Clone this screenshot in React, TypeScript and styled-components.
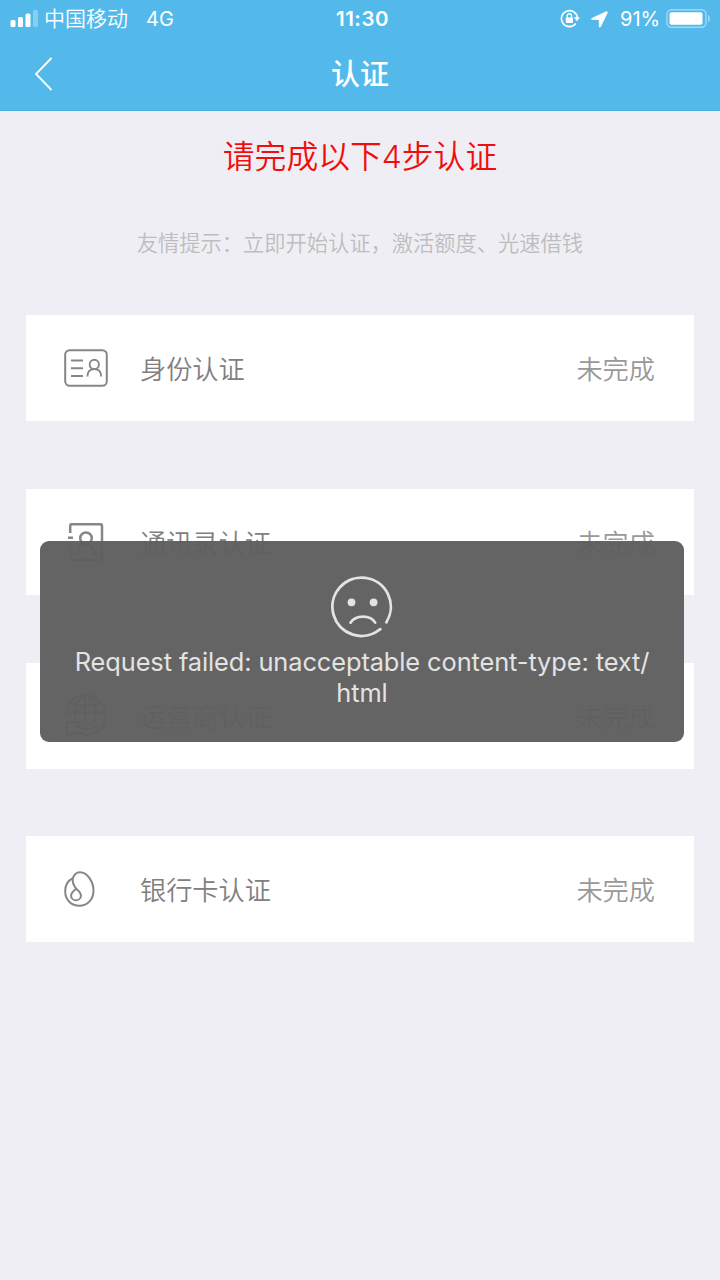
import React from 'react';
import styled, { createGlobalStyle } from 'styled-components';

const GlobalStyle = createGlobalStyle`
  * { box-sizing: border-box; }
  body {
    margin: 0;
    background: #efeef4;
    font-family: Inter, "Noto Sans CJK SC", sans-serif;
  }
`;

const Screen = styled.div`
  position: relative;
  width: 720px;
  height: 1280px;
  overflow: hidden;
  background: #efeef4;
`;

const Header = styled.header`
  height: 111px;
  background: #53b9ea;
  border-bottom: 1px solid #4eaedc;
  color: #fff;
`;

const StatusBar = styled.div`
  display: grid;
  grid-template-columns: 1fr auto 1fr;
  align-items: center;
  height: 38px;
  padding: 0 10px;
  font-size: 20px;
  line-height: 38px;
`;

const StatusGroup = styled.div<{ $end?: boolean }>`
  display: flex;
  align-items: center;
  justify-content: ${({ $end }) => ($end ? 'flex-end' : 'flex-start')};
  height: 38px;
`;

const Carrier = styled.span`
  margin-left: 6px;
  font-size: 21px;
  font-weight: 350;
`;

const Network = styled.span`
  margin-left: 18px;
`;

const Clock = styled.span`
  padding-left: 5px;
  font-weight: 600;
  font-size: 20.5px;
  letter-spacing: 0.5px;
`;

const Percent = styled.span`
  margin: 0 6px 0 12px;
  letter-spacing: -0.1px;
`;

const LocationSlot = styled.span`
  display: flex;
  margin-left: 11px;
`;

const NavBar = styled.div`
  display: grid;
  grid-template-columns: 60px 1fr 60px;
  align-items: center;
  height: 72px;
`;

const BackButton = styled.button`
  display: flex;
  padding: 0 0 2px 34px;
  border: 0;
  background: none;
  color: inherit;
`;

const Title = styled.h1`
  margin: 0;
  padding-top: 1px;
  font-size: 29px;
  font-weight: 500;
  line-height: 72px;
  text-align: center;
`;

const Heading = styled.h2`
  margin: 24px 0 0;
  color: #f20d0d;
  font-size: 31.8px;
  font-weight: 350;
  line-height: 44px;
  text-align: center;
`;

const Hint = styled.p`
  margin: 49px 0 0;
  color: #bdbdc0;
  font-size: 21.25px;
  font-weight: 350;
  line-height: 30px;
  text-align: center;
`;

const List = styled.main`
  display: flex;
  flex-direction: column;
  gap: 67.8px;
  padding: 57px 26px 0;
`;

const Card = styled.section`
  display: flex;
  align-items: center;
  height: 106px;
  padding: 0 39px 0 38px;
  background: #fff;
  font-size: 26.2px;
  font-weight: 350;
`;

const IconSlot = styled.span`
  display: flex;
  width: 76px;
  color: #868686;
`;

const Label = styled.span`
  flex: 1;
  color: #808080;
`;

const State = styled.span`
  color: #999;
`;

const Toast = styled.div`
  position: absolute;
  left: 40px;
  top: 541px;
  display: flex;
  flex-direction: column;
  align-items: center;
  width: 644px;
  height: 201px;
  padding-top: 35px;
  border-radius: 9px;
  background: rgba(94, 94, 94, 0.965);
  color: #e3e3e3;
`;

const Message = styled.p`
  margin: 8px 0 0;
  font-size: 25.4px;
  letter-spacing: -0.1px;
  line-height: 31px;
  text-align: center;
  white-space: nowrap;
`;

const SignalIcon = () => (
  <svg width="28" height="18" viewBox="0 0 28 18" fill="currentColor">
    <rect x="0.5" y="10" width="5" height="7" rx="1.5" />
    <rect x="8" y="7" width="5" height="10" rx="1.5" />
    <rect x="15.5" y="3.5" width="5" height="13.5" rx="1.5" />
    <rect x="23" y="0" width="5" height="17" rx="1.5" opacity=".3" />
  </svg>
);

const LockIcon = () => (
  <svg width="20" height="20" viewBox="0 0 20 20" fill="none" stroke="currentColor">
    <path d="M15.8 14.500A8 8 0 1 1 17.400 8.800" strokeWidth="1.6" />
    <path d="M13.800 8.200h6.200l-3.100 4z" fill="currentColor" stroke="none" />
    <rect x="5.800" y="8.4" width="7.2" height="5.6" rx=".8" fill="currentColor" stroke="none" />
    <path d="M7.300 9V6.8a2.1 2.1 0 0 1 4.2 0V9" strokeWidth="1.4" />
  </svg>
);

const LocationIcon = () => (
  <svg width="17" height="17" viewBox="0 0 17 17" fill="currentColor" stroke="currentColor" strokeWidth=".9" strokeLinejoin="round">
    <path d="M15.2.8 1 7.400c-.8.4-.6 1.100.2 1.100h6.700c.3 0 .4.1.4.4v6.700c0 .8.9.9 1.200.2L16.200 1.700c.3-.7-.3-1.200-1-.9z" />
  </svg>
);

const BatteryIcon = () => (
  <svg width="44" height="20" viewBox="0 0 44 20">
    <rect x="1" y="0.700" width="39" height="17.500" rx="4.500" fill="none" stroke="#fff" strokeWidth="1.400" opacity=".45" />
    <rect x="3.500" y="3.200" width="33" height="12.500" rx="1.800" fill="#fff" />
    <path d="M42 6c2.500 1.200 2.500 5.800 0 7z" fill="#fff" opacity=".45" />
  </svg>
);

const BackIcon = () => (
  <svg width="20" height="34" viewBox="0 0 20 34" fill="none" stroke="currentColor" strokeWidth="1.800">
    <path d="M17.500 1 2 17l15.500 16" />
  </svg>
);

const IdCardIcon = () => (
  <svg width="44" height="38" viewBox="0 0 44 38" fill="none" stroke="currentColor">
    <rect x="1.200" y="1.200" width="41.600" height="35.600" rx="4.500" strokeWidth="2" />
    <path d="M7 11.500h12M7 19.200h12M7 27h12" strokeWidth="2" />
    <ellipse cx="30.300" cy="15.400" rx="4.600" ry="4.700" strokeWidth="1.900" />
    <path d="M23.500 27.500c0-4.600 2.600-7.400 6.800-7.400s6.800 2.800 6.800 7.400" strokeWidth="1.900" />
  </svg>
);

const ContactsIcon = () => (
  <svg width="44" height="38" viewBox="0 0 44 38" fill="none" stroke="currentColor" strokeWidth="2.500">
    <path d="M6.200 10V2.700q0-1.500 1.500-1.500H36.500q1.500 0 1.500 1.500v32.800q0 1.500-1.500 1.500H8q-1.500 0-1.500-1.500V30M4 14.800h5M6.200 19v3M4 25.500h5" />
    <circle cx="22" cy="15.200" r="5.800" />
    <path d="M13.500 32c0-6.500 3.300-10.500 8.500-10.500s8.500 4 8.500 10.500" />
  </svg>
);

const GlobeIcon = () => (
  <svg width="44" height="44" viewBox="0 0 44 44" fill="none" stroke="currentColor" strokeWidth="2">
    <path d="M2 24A20 20 0 1 1 23 41c-4 0-6-1-9-3L3 42V28h12l-2 3c5 5 13 6 20 1" />
    <path d="M1.500 18.500h40M21 1v27M19 1c-7 7-9 16-8 25M23 1c8 7 10 16 8 27M6 8c9 5 22 5 31 0" />
  </svg>
);

const BankIcon = () => (
  <svg width="32" height="36" viewBox="0 0 32 36" fill="none" stroke="currentColor" strokeWidth="2">
    <path d="M8.800 7.200C10.300 3.200 12.300 1.200 15.800 1.200c7.600 0 13.700 9.600 13.700 18.300C29.500 28.300 23.700 34.800 15.500 34.800S1.200 28.800 1.200 20.200C1.200 14.300 4.100 9.600 8.800 7.200c-.6 4.600.8 7.500 3.500 10.600 2.600 2.300 4.600 4.300 4.600 6.600a4.900 4.900 0 0 1-9.800 0c0-2.400 2.500-4.500 5.200-6.600" />
  </svg>
);

const SadIcon = () => (
  <svg width="62" height="62" viewBox="0 0 62 62" fill="none" stroke="currentColor" strokeLinecap="round">
    <path d="M49.300 53.200A29.200 29.200 0 1 1 55.400 46.200" strokeWidth="2.800" />
    <path d="M19.500 46.700C24.500 38.500 39.500 38.500 44.200 46.700" strokeWidth="2.700" />
    <circle cx="20.500" cy="26.300" r="3.900" fill="currentColor" stroke="none" />
    <circle cx="42.600" cy="26.300" r="3.900" fill="currentColor" stroke="none" />
  </svg>
);

const steps = [
  { label: '身份认证', icon: <IdCardIcon /> },
  { label: '通讯录认证', icon: <ContactsIcon /> },
  { label: '运营商认证', icon: <GlobeIcon /> },
  { label: '银行卡认证', icon: <BankIcon /> },
];

export default function App() {
  return (
    <Screen>
      <GlobalStyle />
      <Header>
        <StatusBar>
          <StatusGroup>
            <SignalIcon />
            <Carrier>中国移动</Carrier>
            <Network>4G</Network>
          </StatusGroup>
          <Clock>11:30</Clock>
          <StatusGroup $end>
            <LockIcon />
            <LocationSlot><LocationIcon /></LocationSlot>
            <Percent>91%</Percent>
            <BatteryIcon />
          </StatusGroup>
        </StatusBar>
        <NavBar>
          <BackButton aria-label="返回"><BackIcon /></BackButton>
          <Title>认证</Title>
        </NavBar>
      </Header>
      <Heading>请完成以下4步认证</Heading>
      <Hint>友情提示：立即开始认证，激活额度、光速借钱</Hint>
      <List>
        {steps.map(({ label, icon }) => (
          <Card key={label}>
            <IconSlot>{icon}</IconSlot>
            <Label>{label}</Label>
            <State>未完成</State>
          </Card>
        ))}
      </List>
      <Toast role="alert">
        <SadIcon />
        <Message>
          Request failed: unacceptable content-type: text/
          <br />
          html
        </Message>
      </Toast>
    </Screen>
  );
}
